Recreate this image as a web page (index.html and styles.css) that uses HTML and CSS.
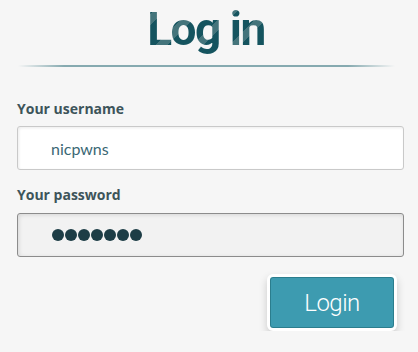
FILE: index.html
```html
<!DOCTYPE html>
<html>
<head>
<meta charset="utf-8">
<link rel="stylesheet" href="styles.css">
</head>
<body>
<div class="login">
  <h1 class="title">Log in</h1>
  <div class="rule"></div>
  <label class="label label-user">Your username</label>
  <div class="field field-user">nicpwns</div>
  <label class="label label-pass">Your password</label>
  <div class="field field-pass">
    <span class="dot"></span><span class="dot"></span><span class="dot"></span><span class="dot"></span><span class="dot"></span><span class="dot"></span><span class="dot"></span>
  </div>
  <div class="actions">
    <button class="btn">Login</button>
  </div>
</div>
</body>
</html>
```

FILE: styles.css
```css
html, body {
  margin: 0;
  padding: 0;
  background: #f6f6f6;
}
.login {
  width: 387px;
  margin-left: 17px;
  display: flex;
  flex-direction: column;
}
.title {
  margin: 0;
  height: 60px;
  padding-top: 2px;
  box-sizing: border-box;
  text-align: center;
  font-family: Roboto, sans-serif;
  font-weight: 700;
  font-size: 46px;
  line-height: 54px;
  letter-spacing: -1.5px;
  padding-right: 9px;
  background: repeating-linear-gradient(135deg, #44747b 0 8px, #15545f 8px 26px);
  -webkit-background-clip: text;
  background-clip: text;
  color: transparent;
}
.rule {
  margin-top: 5px;
  margin-left: 1px;
  width: 377px;
  height: 2px;
  background: linear-gradient(90deg, rgba(134,170,176,0) 0, #86aab0 46px, #86aab0 330px, rgba(134,170,176,0) 377px);
}
.label {
  font-family: "Open Sans", sans-serif;
  font-weight: 700;
  font-size: 14px;
  color: #3d545a;
  line-height: 18px;
}
.label-user {
  margin-top: 33px;
}
.label-pass {
  margin-top: 16px;
}
.field {
  box-sizing: border-box;
  height: 44px;
  border-radius: 3px;
  padding-left: 33px;
  display: flex;
  align-items: center;
}
.field-user {
  margin-top: 8px;
  background: #fff;
  border: 1px solid #c9c9c9;
  box-shadow: inset 1px 1px 3px rgba(0,0,0,0.08);
  font-family: Lato, sans-serif;
  font-size: 16px;
  color: #3a6774;
}
.field-pass {
  margin-top: 9px;
  background: #f2f2f2;
  border: 1px solid #8c8c8c;
  box-shadow: inset 1px 1px 4px rgba(0,0,0,0.12);
  gap: 1px;
  padding-left: 34px;
}
.dot {
  width: 12px;
  height: 12px;
  border-radius: 50%;
  background: #1d3d46;
}
.actions {
  display: flex;
  justify-content: flex-end;
  padding-right: 7px;
  margin-top: 17px;
}
.btn {
  box-sizing: border-box;
  width: 130px;
  height: 57px;
  border: 3px solid #fff;
  border-radius: 6px;
  background: #3d9bb0;
  box-shadow: inset 0 0 0 1px #2b7d8d, 0 4px 8px rgba(0,0,0,0.18);
  color: #fff;
  font-family: Roboto, sans-serif;
  font-weight: 300;
  font-size: 24px;
  padding: 0;
  letter-spacing: -0.5px;
}
```
